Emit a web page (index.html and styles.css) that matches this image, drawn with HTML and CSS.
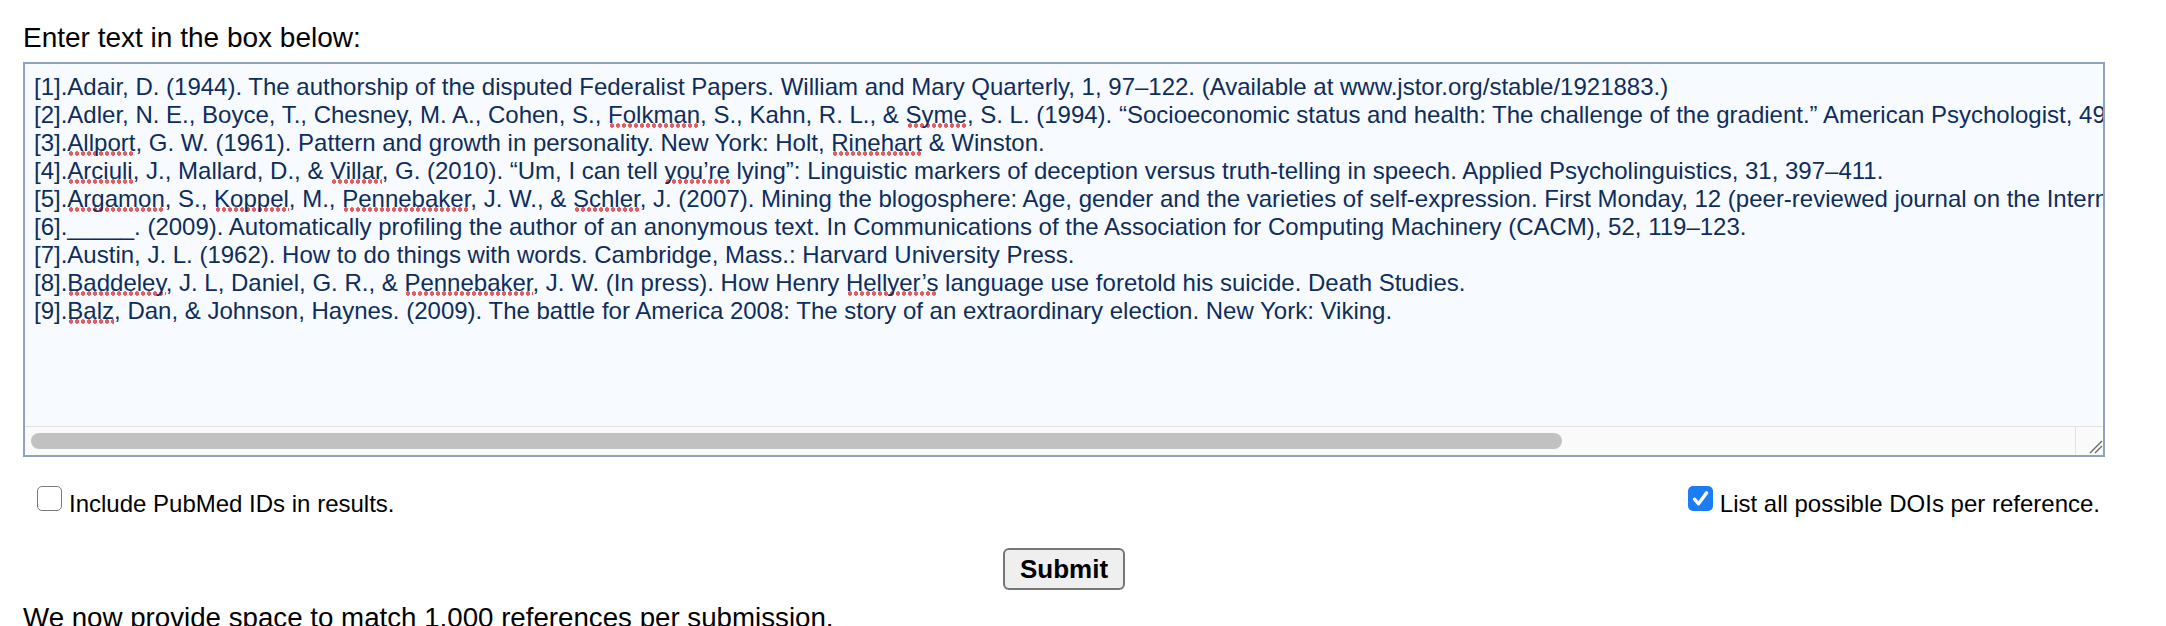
FILE: index.html
```html
<!DOCTYPE html>
<html lang="en">
<head>
<meta charset="utf-8">
<title>Reference matching</title>
<link rel="stylesheet" href="styles.css">
</head>
<body>
<div class="page">
  <p class="prompt">Enter text in the box below:</p>
  <div class="refbox">
    <div class="reftext">
      <div class="line">[1].Adair, D. (1944). The authorship of the disputed Federalist Papers. William and Mary Quarterly, 1, 97–122. (Available at www.jstor.org/stable/1921883.)</div>
      <div class="line">[2].Adler, N. E., Boyce, T., Chesney, M. A., Cohen, S., <span class="sp">Folkman</span>, S., Kahn, R. L., &amp; <span class="sp">Syme</span>, S. L. (1994). “Socioeconomic status and health: The challenge of the gradient.” American Psychologist, 49, 15–24.</div>
      <div class="line">[3].<span class="sp">Allport</span>, G. W. (1961). Pattern and growth in personality. New York: Holt, <span class="sp">Rinehart</span> &amp; Winston.</div>
      <div class="line">[4].<span class="sp">Arciuli</span>, J., Mallard, D., &amp; <span class="sp">Villar</span>, G. (2010). “Um, I can tell <span class="sp">you’re</span> lying”: Linguistic markers of deception versus truth-telling in speech. Applied Psycholinguistics, 31, 397–411.</div>
      <div class="line">[5].<span class="sp">Argamon</span>, S., <span class="sp">Koppel</span>, M., <span class="sp">Pennebaker</span>, J. W., &amp; <span class="sp">Schler</span>, J. (2007). Mining the blogosphere: Age, gender and the varieties of self-expression. First Monday, 12 (peer-reviewed journal on the Internet).</div>
      <div class="line">[6]._____. (2009). Automatically profiling the author of an anonymous text. In Communications of the Association for Computing Machinery (CACM), 52, 119–123.</div>
      <div class="line">[7].Austin, J. L. (1962). How to do things with words. Cambridge, Mass.: Harvard University Press.</div>
      <div class="line">[8].<span class="sp">Baddeley</span>, J. L, Daniel, G. R., &amp; <span class="sp">Pennebaker</span>, J. W. (In press). How Henry <span class="sp">Hellyer’s</span> language use foretold his suicide. Death Studies.</div>
      <div class="line">[9].<span class="sp">Balz</span>, Dan, &amp; Johnson, Haynes. (2009). The battle for America 2008: The story of an extraordinary election. New York: Viking.</div>
    </div>
    <div class="hscroll">
      <div class="track"><div class="thumb"></div></div>
      <div class="resizer">
        <svg width="27" height="28" viewBox="0 0 27 28"><path d="M14 26 L26 14 M19 26 L26 19" stroke="#6b6b6b" stroke-width="1.4" fill="none"/></svg>
      </div>
    </div>
  </div>
  <div class="options">
    <label class="opt"><span class="cb"></span><span class="opt-text">Include PubMed IDs in results.</span></label>
    <label class="opt"><span class="cb checked"><svg width="25" height="25" viewBox="0 0 25 25"><path d="M6.5 13.2 L10.6 17.8 L18.6 6.8" stroke="#fff" stroke-width="3.4" stroke-linecap="round" stroke-linejoin="round" fill="none"/></svg></span><span class="opt-text">List all possible DOIs per reference.</span></label>
  </div>
  <div class="actions"><button class="submit" type="button">Submit</button></div>
  <p class="note">We now provide space to match 1,000 references per submission.</p>
</div>
</body>
</html>
```
FILE: styles.css
```css
html, body {
  margin: 0;
  padding: 0;
  background: #ffffff;
}
body {
  font-family: "Liberation Sans", Arial, Helvetica, sans-serif;
  color: #000000;
}
.page {
  margin-left: 23px;
  width: 2082px;
}
.prompt {
  margin: 0;
  padding-top: 22px;
  font-size: 28px;
  line-height: 32px;
}
.refbox {
  margin-top: 8px;
  height: 395px;
  box-sizing: border-box;
  border: 2px solid #8fa2c2;
  background: #f7fbff;
  display: flex;
  flex-direction: column;
}
.reftext {
  flex: 1;
  min-height: 0;
  overflow: hidden;
  padding: 9px 0 0 9px;
  font-size: 24px;
  line-height: 28px;
  color: #0f2d5c;
}
.line {
  white-space: pre;
}
.sp {
  background-image: radial-gradient(circle at 50% 50%, #e35f5f 2px, rgba(227, 95, 95, 0) 2.5px);
  background-size: 6px 5px;
  background-repeat: repeat-x;
  background-position: 1px 100%;
}
.hscroll {
  height: 28px;
  border-top: 1px solid #e3e3e3;
  background: #fafafa;
  display: flex;
}
.track {
  flex: 1;
}
.thumb {
  margin: 6px 0 0 6px;
  width: 1531px;
  height: 16px;
  border-radius: 8px;
  background: #c1c1c1;
}
.resizer {
  width: 27px;
  border-left: 1px solid #e3e3e3;
  display: flex;
}
.resizer svg {
  display: block;
}
.options {
  margin-top: 29px;
  padding: 0 5px 0 14px;
  display: flex;
  justify-content: space-between;
}
.opt {
  display: flex;
  align-items: flex-start;
  gap: 7px;
  font-size: 24px;
  line-height: 28px;
}
.opt-text {
  padding-top: 4px;
}
.cb {
  width: 25px;
  height: 25px;
  box-sizing: border-box;
  border: 1.5px solid #7b7b7b;
  border-radius: 5px;
  background: #ffffff;
  flex: none;
}
.cb.checked {
  border: none;
  background: #1b7cf4;
}
.cb svg {
  display: block;
}
.actions {
  margin-top: 30px;
  display: flex;
  justify-content: center;
}
.submit {
  width: 122px;
  height: 42px;
  padding: 0;
  box-sizing: border-box;
  border: 2px solid #767676;
  border-radius: 6px;
  background: #efefef;
  color: #000000;
  font-family: "Liberation Sans", Arial, Helvetica, sans-serif;
  font-weight: bold;
  font-size: 26px;
  line-height: 38px;
}
.note {
  margin: 12px 0 0 0;
  font-size: 27.7px;
  line-height: 32px;
}
```
